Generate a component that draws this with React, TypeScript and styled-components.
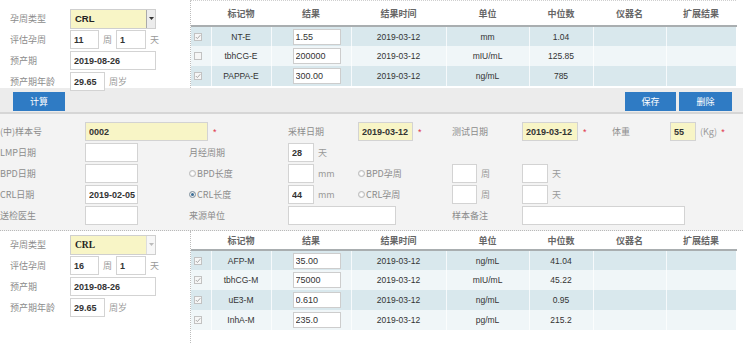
import React from "react";
import styled, { createGlobalStyle } from "styled-components";

const CJK = `"Noto Sans CJK SC", "Liberation Sans", sans-serif`;
const SANS = `"Liberation Sans", "Noto Sans CJK SC", sans-serif`;

type ResultRow = {
    on: boolean;
    name: string;
    value: string;
    unit: string;
    median: string;
};

const earlyRows: ResultRow[] = [
    { on: true, name: "NT-E", value: "1.55", unit: "mm", median: "1.04" },
    { on: false, name: "tbhCG-E", value: "200000", unit: "mIU/mL", median: "125.85" },
    { on: true, name: "PAPPA-E", value: "300.00", unit: "ng/mL", median: "785" },
];

const midRows: ResultRow[] = [
    { on: true, name: "AFP-M", value: "35.00", unit: "ng/mL", median: "41.04" },
    { on: true, name: "tbhCG-M", value: "75000", unit: "mIU/mL", median: "45.22" },
    { on: true, name: "uE3-M", value: "0.610", unit: "ng/mL", median: "0.95" },
    { on: true, name: "InhA-M", value: "235.0", unit: "pg/mL", median: "215.2" },
];

const headers = ["", "标记物", "结果", "结果时间", "单位", "中位数", "仪器名", "扩展结果"];
const colWidths = [20, 60, 80, 95, 83, 64, 73, 70];

const GestationForm = ({ week, serif, top }: { week: string; serif?: boolean; top: number }) => (
    <SideForm $top={top}>
        <FormRow>
            <Label>孕周类型</Label>
            <Selector $serif={serif}>
                CRL
                <Arrow $dim={serif}>
                    <svg width="5" height="3" viewBox="0 0 5 3">
                        <path d="M0 0 L5 0 L2.5 3 Z" fill={serif ? "#bbb" : "#333"} />
                    </svg>
                </Arrow>
            </Selector>
        </FormRow>
        <FormRow>
            <Label>评估孕周</Label>
            <Field $w={29} readOnly value={week} />
            <Unit>周</Unit>
            <Field $w={30} readOnly value="1" />
            <Unit>天</Unit>
        </FormRow>
        <FormRow>
            <Label>预产期</Label>
            <Field $w={86} readOnly value="2019-08-26" />
        </FormRow>
        <FormRow>
            <Label>预产期年龄</Label>
            <Field $w={35} readOnly value="29.65" />
            <Unit>周岁</Unit>
        </FormRow>
    </SideForm>
);

const ResultTable = ({ rows, headHeight, dottedTop }: { rows: ResultRow[]; headHeight: number; dottedTop?: boolean }) => (
    <TableWrap $dottedTop={dottedTop}>
        <Grid>
            <colgroup>
                {colWidths.map((w, i) => <Col key={i} $w={w} />)}
            </colgroup>
            <thead>
                <tr>
                    {headers.map((h, i) => <Head key={i} $h={headHeight}>{h}</Head>)}
                </tr>
            </thead>
            <tbody>
                {rows.map((r, i) => (
                    <BodyRow key={r.name} $alt={i % 2 === 1}>
                        <CheckCell>
                            <Check>
                                {r.on && (
                                    <svg width="6" height="6" viewBox="0 0 6 6">
                                        <path d="M0.8 3 L2.4 4.6 L5.3 1.2" stroke="#a9a9a9" strokeWidth="1" fill="none" />
                                    </svg>
                                )}
                            </Check>
                        </CheckCell>
                        <Cell>{r.name}</Cell>
                        <ValueCell><ValueInput readOnly value={r.value} /></ValueCell>
                        <Cell>2019-03-12</Cell>
                        <Cell>{r.unit}</Cell>
                        <Cell>{r.median}</Cell>
                        <Cell />
                        <Cell />
                    </BodyRow>
                ))}
            </tbody>
        </Grid>
    </TableWrap>
);

const App = () => (
    <Page>
        <GlobalStyle />
        <Block $h={88}>
            <GestationForm week="11" top={8} />
            <ResultTable rows={earlyRows} headHeight={25} dottedTop />
        </Block>

        <Toolbar>
            <Button $w={52}>计算</Button>
            <Button $w={51} $push>保存</Button>
            <Button $w={53}>删除</Button>
        </Toolbar>

        <Panel>
            <PanelGrid>
                <Cellx><PLabel>(中)样本号</PLabel></Cellx>
                <Cellx $span={2}><Field $w={123} $yellow readOnly value="0002" /><Star>*</Star></Cellx>
                <Cellx><PLabel>采样日期</PLabel></Cellx>
                <Cellx><Field $w={55} $yellow readOnly value="2019-03-12" /><Star>*</Star></Cellx>
                <Cellx><PLabel>测试日期</PLabel></Cellx>
                <Cellx><Field $w={56} $yellow readOnly value="2019-03-12" /><Star>*</Star></Cellx>
                <Cellx><PLabel>体重</PLabel></Cellx>
                <Cellx><Field $w={26} $yellow readOnly value="55" /><Unit>(Kg)</Unit><Star $tight>*</Star></Cellx>

                <Cellx><PLabel>LMP日期</PLabel></Cellx>
                <Cellx><Field $w={53} readOnly value="" /></Cellx>
                <Cellx><PLabel>月经周期</PLabel></Cellx>
                <Cellx $span={6}><Field $w={26} readOnly value="28" /><Unit>天</Unit></Cellx>

                <Cellx><PLabel>BPD日期</PLabel></Cellx>
                <Cellx><Field $w={53} readOnly value="" /></Cellx>
                <Cellx><Radio /><PLabel>BPD长度</PLabel></Cellx>
                <Cellx><Field $w={26} readOnly value="" /><Unit>mm</Unit></Cellx>
                <Cellx><Radio /><PLabel>BPD孕周</PLabel></Cellx>
                <Cellx><Field $w={25} readOnly value="" /><Unit>周</Unit></Cellx>
                <Cellx $span={3}><Field $w={26} readOnly value="" /><Unit>天</Unit></Cellx>

                <Cellx><PLabel>CRL日期</PLabel></Cellx>
                <Cellx><Field $w={53} readOnly value="2019-02-05" /></Cellx>
                <Cellx><Radio $on /><PLabel>CRL长度</PLabel></Cellx>
                <Cellx><Field $w={26} readOnly value="44" /><Unit>mm</Unit></Cellx>
                <Cellx><Radio /><PLabel>CRL孕周</PLabel></Cellx>
                <Cellx><Field $w={25} readOnly value="" /><Unit>周</Unit></Cellx>
                <Cellx $span={3}><Field $w={26} readOnly value="" /><Unit>天</Unit></Cellx>

                <Cellx><PLabel>送检医生</PLabel></Cellx>
                <Cellx><Field $w={53} readOnly value="" /></Cellx>
                <Cellx><PLabel>来源单位</PLabel></Cellx>
                <Cellx $span={2}><Field $w={108} readOnly value="" /></Cellx>
                <Cellx><PLabel>样本备注</PLabel></Cellx>
                <Cellx $span={3}><Field $w={163} readOnly value="" /></Cellx>
            </PanelGrid>
        </Panel>

        <Block $h={112}>
            <GestationForm week="16" serif top={3} />
            <ResultTable rows={midRows} headHeight={19} />
        </Block>
    </Page>
);

export default App;

const GlobalStyle = createGlobalStyle`
    html, body {
        margin: 0;
        padding: 0;
        background: #fff;
    }
    body {
        font-family: ${SANS};
        font-size: 9px;
        color: #333;
    }
    * {
        box-sizing: border-box;
    }
`

const Page = styled.div`
    width: 743px;
    height: 343px;
    overflow: hidden;
    background: #fff;
`

const Block = styled.section<{ $h: number }>`
    display: flex;
    height: ${p => p.$h}px;
`

const SideForm = styled.div<{ $top: number }>`
    width: 190px;
    flex-shrink: 0;
    padding: ${p => p.$top}px 0 0 10px;
`

const FormRow = styled.div`
    display: flex;
    align-items: center;
    height: 21px;
`

const Label = styled.span`
    width: 60px;
    font-family: ${CJK};
    font-size: 9px;
    color: #8c8c8c;
    white-space: nowrap;
`

const Field = styled.input<{ $w: number; $yellow?: boolean }>`
    width: ${p => p.$w}px;
    height: 19px;
    margin: 0;
    padding: 0 0 0 3px;
    border: 1px solid #d3d3d3;
    background: ${p => (p.$yellow ? "#f8f5c6" : "#fff")};
    font: bold 9px ${SANS};
    color: #333;
    outline: none;
    flex-shrink: 0;
`

const Unit = styled.span`
    margin: 0 4px;
    font-family: ${CJK};
    font-size: 9px;
    color: #999;
    white-space: nowrap;
`

const Selector = styled.div<{ $serif?: boolean }>`
    display: flex;
    align-items: center;
    width: 86px;
    height: 20px;
    padding-left: 4px;
    border: 1px solid #cfcfcf;
    background: #f8f5c6;
    font-family: ${p => (p.$serif ? `"Liberation Serif", serif` : SANS)};
    font-weight: bold;
    font-size: 9.5px;
    color: #222;
`

const Arrow = styled.span<{ $dim?: boolean }>`
    display: flex;
    align-items: center;
    justify-content: center;
    width: 9px;
    height: 18px;
    margin-left: auto;
    border-left: 1px solid ${p => (p.$dim ? "#ddd" : "#aaa")};
    background: ${p => (p.$dim ? "#f7f7f7" : "#ececec")};
`

const TableWrap = styled.div<{ $dottedTop?: boolean }>`
    width: 546px;
    border-left: 1px dotted #bdbdbd;
    border-top: ${p => (p.$dottedTop ? "1px dotted #cfcfcf" : "0")};
`

const Grid = styled.table`
    width: 545px;
    border-collapse: collapse;
    table-layout: fixed;
`

const Col = styled.col<{ $w: number }>`
    width: ${p => p.$w}px;
`

const Head = styled.th<{ $h: number }>`
    height: ${p => p.$h}px;
    padding: 0;
    background: #fff;
    border-bottom: 2px solid #a9aeb0;
    font-family: ${CJK};
    font-weight: bold;
    font-size: 9px;
    color: #666;
    text-align: center;
`

const BodyRow = styled.tr<{ $alt: boolean }>`
    height: 20px;
    background: ${p => (p.$alt ? "#f0f6f8" : "#d9e8ed")};
`

const Cell = styled.td`
    padding: 0;
    border-right: 1px solid rgba(255, 255, 255, 0.75);
    text-align: center;
    font-size: 8.5px;
    color: #333;
`

const CheckCell = styled(Cell)`
    text-align: left;
    padding-left: 3px;
`

const Check = styled.span`
    display: flex;
    align-items: center;
    justify-content: center;
    width: 8px;
    height: 8px;
    border: 1px solid #c2c2c2;
    background: #f6f6f6;
`

const ValueCell = styled(Cell)`
    text-align: left;
    padding-left: 21px;
`

const ValueInput = styled.input`
    display: block;
    width: 48px;
    height: 16px;
    margin: 0;
    padding: 0 0 0 2px;
    border: 1px solid #cdcdcd;
    background: #fff;
    font: 9px ${SANS};
    color: #333;
    outline: none;
`

const Toolbar = styled.div`
    display: flex;
    align-items: flex-start;
    gap: 3px;
    height: 26px;
    padding: 4px 11px 0 13px;
    background: #ececec;
    border-bottom: 2px solid #d6d6d6;
`

const Button = styled.button<{ $w: number; $push?: boolean }>`
    width: ${p => p.$w}px;
    height: 19px;
    margin: 0 0 0 ${p => (p.$push ? "auto" : "0")};
    padding: 0;
    border: 0;
    background: #2f7bc4;
    color: #fff;
    font-family: ${CJK};
    font-size: 9px;
`

const Panel = styled.div`
    height: 117px;
    padding-top: 7px;
    background: #f3f3f3;
    border-bottom: 1px dotted #b9b9b9;
`

const PanelGrid = styled.div`
    display: grid;
    grid-template-columns: 85px 104px 99px 70px 94px 70px 90px 58px 1fr;
    grid-auto-rows: 21px;
`

const Cellx = styled.div<{ $span?: number }>`
    grid-column: span ${p => p.$span ?? 1};
    display: flex;
    align-items: center;
    min-width: 0;
`

const PLabel = styled.span`
    font-family: ${CJK};
    font-size: 9px;
    color: #8c8c8c;
    white-space: nowrap;
`

const Radio = styled.span<{ $on?: boolean }>`
    width: 7px;
    height: 7px;
    margin-right: 1px;
    border-radius: 50%;
    border: 1px solid ${p => (p.$on ? "#7f8f9c" : "#b5b5b5")};
    background: ${p => (p.$on ? "radial-gradient(circle, #3b6d96 45%, #c8d3dc 55%)" : "#fff")};
    box-shadow: inset 0 0 0 1px #eee;
    flex-shrink: 0;
`

const Star = styled.span<{ $tight?: boolean }>`
    margin-left: ${p => (p.$tight ? 0 : 5)}px;
    color: #e0344a;
    font-size: 9px;
`
